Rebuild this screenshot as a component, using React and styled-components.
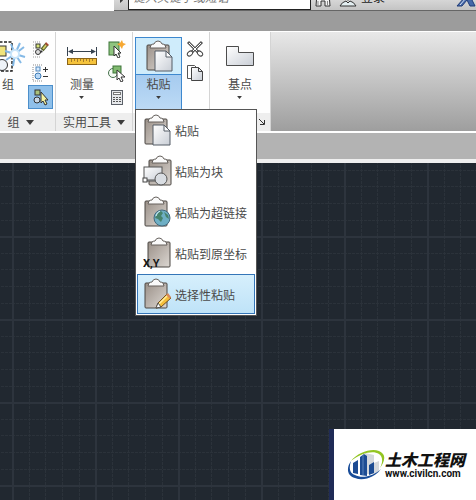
import React from 'react'
import styled, {createGlobalStyle, css} from 'styled-components'

const GlobalStyle = createGlobalStyle`
    * {
        box-sizing: border-box;
    }
    body {
        margin: 0;
        background: #212830;
        font-family: 'Noto Sans CJK SC', 'Liberation Sans', sans-serif;
        font-size: 12px;
        color: #4a4a4a;
    }
    button, input {
        font: inherit;
        color: inherit;
    }
    svg {
        display: block;
        flex: none;
    }
`

const Board = () => (
    <>
        <rect x="1" y="4" width="22" height="25" rx="1" fill="url(#board)" stroke="#4b4642" />
        <path d="M4 7L5 4Q6 3 8 3Q9 0 12 0Q15 0 16 3Q18 3 19 4L20 7Z" fill="#fafafa" stroke="#66615d" />
    </>
)

const Paste = () => (
    <svg width="28" height="32" viewBox="-1 -1 28 32">
        <Board />
        <path d="M9 10H20L26 16V30H9Z" fill="url(#paper)" stroke="#555c66" />
        <path d="M20 10V16H26Z" fill="#fff" stroke="#555c66" />
    </svg>
)

const PasteBlock = () => (
    <svg width="30" height="32" viewBox="-1 -1 30 32">
        <g transform="translate(5 0)"><Board /></g>
        <rect x="1" y="11" width="18" height="14" fill="url(#paper)" stroke="#555" />
        <circle cx="18" cy="23" r="6" fill="#d9dde2" stroke="#555" />
        <path d="M3 24H12" stroke="#555" />
        <rect x="0" y="22" width="4" height="4" fill="#fff" stroke="#444" />
    </svg>
)

const PasteLink = () => (
    <svg width="28" height="32" viewBox="-1 -1 28 32">
        <Board />
        <circle cx="18" cy="21" r="8" fill="#6eafc5" stroke="#42677c" />
        <path d="M13 17L17 14L19 16L17 19L19 21L17 25L14 22L11 21ZM20 15L24 18L25 22L22 20Z" fill="#47836c" />
        <path d="M12 19Q13 15 16 14" fill="none" stroke="#d8f2f4" />
    </svg>
)

const PasteXY = () => (
    <svg width="28" height="32" viewBox="-1 -1 28 32">
        <g transform="translate(3 0)"><Board /></g>
        <text x="-1" y="29" fontFamily="Roboto, sans-serif" fontSize="11" fontWeight="700" fill="#151515">X,Y</text>
    </svg>
)

const PasteSpecial = () => (
    <svg width="28" height="32" viewBox="-1 -1 28 32">
        <Board />
        <path d="M12 29L14 24L23 15L27 19L17 28Z" fill="#f6bf3a" stroke="#74501e" />
        <path d="M15 25L24 16" stroke="#fff0a0" strokeWidth="1.5" />
        <path d="M12 29L14 24L17 28Z" fill="#fff" stroke="#555" />
        <path d="M22 16L24 14L27 18L26 20Z" fill="#d78a5b" />
    </svg>
)

const Group = () => (
    <svg width="46" height="34" viewBox="2 0 46 34">
        <rect x="3" y="3" width="26" height="29" fill="none" stroke="#222" strokeWidth="1.5" strokeDasharray="3 1.500" />
        <rect x="6" y="7" width="17" height="10" fill="#efe37c" stroke="#333" />
        <circle cx="19" cy="26" r="5.500" fill="#eef3f8" stroke="#333" />
        <path d="M32 15L37 4M32 15L41 8M32 15L42 18M32 15L38 24M32 15L30 27M32 15L23 21M32 15L22 12M32 15L28 5" stroke="#84b9e6" strokeWidth="2" />
        <circle cx="32" cy="15" r="5" fill="#c9e5fa" />
        <circle cx="32" cy="15" r="3" fill="#fff" />
    </svg>
)

const EditGroup = () => (
    <svg width="18" height="18" viewBox="0 0 18 18">
        <path d="M1 2H9M1 5H2M1 8H2M1 11H2M1 14H2M1 17H9" stroke="#999" strokeDasharray="1 1" />
        <rect x="4" y="4" width="4" height="4" fill="#d8e57a" stroke="#333" />
        <circle cx="6" cy="12" r="2.500" fill="#ddd" stroke="#333" />
        <path d="M10 10L15 4" stroke="#566030" strokeWidth="4" />
        <path d="M11 9L15 4" stroke="#d2cd65" strokeWidth="2" />
        <path d="M8 13L9 10L11 12Z" fill="#333" />
        <path d="M14 2L17 5L15 6L13 4Z" fill="#a34932" />
    </svg>
)

const AddRemove = () => (
    <svg width="18" height="18" viewBox="0 0 18 18">
        <path d="M1 1H11M1 17H11" stroke="#888" strokeDasharray="1 1" />
        <path d="M1 3V16" stroke="#888" strokeDasharray="1 1" />
        <rect x="4" y="3" width="4" height="4" fill="#d7ebff" stroke="#5388bb" />
        <circle cx="6" cy="12" r="3" fill="#b9d9f7" stroke="#3b79b4" />
        <path d="M11 5.500H16M13.500 3V8M11 12.500H16" stroke="#333" />
    </svg>
)

const SelectGroup = () => (
    <svg width="18" height="18" viewBox="0 0 18 18">
        <rect x="3" y="2" width="5" height="5" fill="#a9c17b" stroke="#333" />
        <circle cx="5" cy="12" r="3" fill="#c8d8e7" stroke="#333" />
        <path d="M9 4V15L11 13L13 17L15 16L13 12H16Z" fill="#f4f3a1" stroke="#333" />
    </svg>
)

const Measure = () => (
    <svg width="30" height="18" viewBox="0 0 30 18">
        <path d="M.5 0V9M29.500 0V9M2 4.500H28" stroke="#36424f" />
        <path d="M1 4.500L6 2V7ZM29 4.500L24 2V7Z" fill="#36424f" />
        <rect x=".5" y="11.500" width="29" height="6" fill="#f5c33c" stroke="#8c6417" />
        <path d="M4.500 12V15M7.500 12V14M10.500 12V15M13.500 12V14M16.500 12V15M19.500 12V14M22.500 12V15M25.500 12V14" stroke="#a57c2b" />
    </svg>
)

const QuickSelect = () => (
    <svg width="18" height="18" viewBox="0 0 18 18">
        <rect x="1" y="2" width="10" height="13" fill="#8fc47f" stroke="#3c7538" />
        <path d="M14 0L15 3L18 4L15 6L14 9L12 6L9 4L12 3Z" fill="#f7a832" />
        <path d="M6 6V16L8 14L10 18L12 17L10 13H13Z" fill="#fff" stroke="#333" />
    </svg>
)

const SelectAll = () => (
    <svg width="18" height="18" viewBox="0 0 18 18">
        <circle cx="5" cy="9" r="4.500" fill="#f4fbf4" stroke="#456f4a" />
        <rect x="5" y="2" width="8" height="7" fill="#80b96f" stroke="#3c7538" />
        <path d="M9 6V16L11 14L13 18L15 17L13 13H17Z" fill="#fff" stroke="#333" />
    </svg>
)

const Calculator = () => (
    <svg width="18" height="18" viewBox="0 0 18 18">
        <rect x="3.500" y="2.500" width="11" height="14" fill="#e6e8eb" stroke="#5b6068" />
        <rect x="5.500" y="4.500" width="7" height="2" fill="#fff" stroke="#777" />
        <path d="M5 9.500H13M5 11.500H13M5 13.500H13" stroke="#555" strokeDasharray="2 1" />
    </svg>
)

const Cut = () => (
    <svg width="18" height="18" viewBox="0 0 18 18">
        <path d="M2 2L13 13M16 2L5 13" fill="none" stroke="#555" strokeWidth="3" />
        <path d="M3 3L13 13M15 3L5 13" stroke="#fff" />
        <ellipse cx="4" cy="13.500" rx="3" ry="2" transform="rotate(-40 4 13.500)" fill="#fff" stroke="#444" />
        <ellipse cx="14" cy="13.500" rx="3" ry="2" transform="rotate(40 14 13.500)" fill="#fff" stroke="#444" />
    </svg>
)

const Copy = () => (
    <svg width="18" height="18" viewBox="0 0 18 18">
        <path d="M1.500 1.500H8.500L11.500 4.500V14.500H1.500Z" fill="#fff" stroke="#555" />
        <path d="M5.500 3.500H12.500L16.500 7.500V16.500H5.500Z" fill="url(#paper)" stroke="#444" />
        <path d="M12.500 3.500V7.500H16.500" fill="none" stroke="#444" />
    </svg>
)

const BasePoint = () => (
    <svg width="28" height="20" viewBox="0 0 28 20">
        <path d="M.5 .5H12.500V6.500H27.500V19.500H.5Z" fill="url(#paper)" stroke="#4c4c4c" />
    </svg>
)

const Binoculars = () => (
    <svg width="16" height="17" viewBox="0 0 16 17">
        <path d="M2 3H6V9H10V3H14L15 16H10V11H6V16H1Z" fill="#f4f4f4" stroke="#333" />
        <path d="M3 11V15M12.500 11V15" stroke="#888" />
    </svg>
)

const User = () => (
    <svg width="18" height="17" viewBox="0 0 18 17">
        <circle cx="9" cy="6" r="4" fill="#fff" stroke="#333" />
        <path d="M1 16Q3 12 7 11L9 13L11 11Q15 12 17 16Z" fill="#e4eff2" stroke="#333" />
    </svg>
)

const Exchange = () => (
    <svg width="20" height="17" viewBox="0 0 20 17">
        <path d="M1 16L9 7L6 2H11L13 5L17 1H21L15 8L19 16H14L11 10L6 16Z" fill="#4668a8" stroke="#203d78" />
        <path d="M4 15L10 8" stroke="#d2e0f5" />
    </svg>
)

const Caret = ({big}) => (
    <svg width={big ? 8 : 5} height={big ? 5 : 3} viewBox="0 0 8 5">
        <path d="M0 0H8L4 5Z" fill="#3c3c3c" />
    </svg>
)

const Launcher = () => (
    <svg width="6" height="6" viewBox="0 0 6 6">
        <path d="M0 0L5 5M1 5.500H5.500V1" fill="none" stroke="#333" />
    </svg>
)

const Defs = () => (
    <Gradients width="0" height="0" aria-hidden="true">
        <linearGradient id="board" x2="1" y2="1">
            <stop stopColor="#9a9088" />
            <stop offset="1" stopColor="#dcd7d2" />
        </linearGradient>
        <linearGradient id="paper" x2="1" y2="1">
            <stop stopColor="#fff" />
            <stop offset="1" stopColor="#c9ced6" />
        </linearGradient>
    </Gradients>
)

const Grid = () => (
    <svg width="100%" height="100%" aria-hidden="true">
        <pattern id="grid" x="12" y="73" width="83" height="83" patternUnits="userSpaceOnUse">
            <path d="M17.500 0V83M33.500 0V83M50.500 0V83M67.500 0V83M0 17.500H83M0 33.500H83M0 50.500H83M0 67.500H83" stroke="#2b323a" strokeDasharray="3 1" />
            <path d="M1 0V83M0 1H83" stroke="#2d343d" strokeWidth="2" />
        </pattern>
        <rect width="100%" height="100%" fill="url(#grid)" />
    </svg>
)

const Logo = () => (
    <svg width="38" height="32" viewBox="0 0 38 32">
        <path d="M18 4L27 6V25H20Z" fill="#d4d8dc" />
        <path d="M27 14L32 12V23L27 25Z" fill="#d4d8dc" />
        <path d="M6 14L11 11V25L6 24ZM13 8L17 5L20 7V27L13 26ZM22 16L27 13V24L22 26Z" fill="#1d4c93" />
        <path d="M16 6V26" stroke="#5d83bb" />
        <path d="M4 12C12 2 30 -3 36 5C39 9 36 15 33 19C36 13 36 8 32 5C26 1 14 4 4 12Z" fill="#93c523" />
        <path d="M4 12C-1 19 0 27 8 29C17 33 29 27 34 20C27 27 15 30 8 26C2 24 2 18 4 12Z" fill="#194d99" />
    </svg>
)

const pasteOptions = [
    {label: '粘贴', icon: <Paste />},
    {label: '粘贴为块', icon: <PasteBlock />},
    {label: '粘贴为超链接', icon: <PasteLink />},
    {label: '粘贴到原坐标', icon: <PasteXY />},
    {label: '选择性粘贴', icon: <PasteSpecial />, active: true},
]

function Tool({label, icon, caret = true, width}) {
    return (
        <ToolButton $width={width}>
            <ToolIcon>{icon}</ToolIcon>
            <ToolText>{label}{caret && <Caret />}</ToolText>
        </ToolButton>
    )
}

export default function App() {
    return (
        <Window>
            <GlobalStyle />
            <Defs />
            <TitleBar>
                <TitleTools>
                    <SearchArrow aria-label="展开"><Caret /></SearchArrow>
                    <Search aria-label="搜索" placeholder="键入关键字或短语" />
                    <TitleButton aria-label="查找"><Binoculars /></TitleButton>
                    <TitleButton><User />登录</TitleButton>
                    <Spacer />
                    <TitleButton aria-label="Exchange"><Exchange /></TitleButton>
                </TitleTools>
            </TitleBar>
            <TabStrip />
            <Ribbon>
                <Panel $width={70} $clipped>
                    <PanelBody $left={2}>
                        <Tool label="组" icon={<Group />} caret={false} width={40} />
                        <SmallTools>
                            <SmallButton aria-label="编辑组"><EditGroup /></SmallButton>
                            <SmallButton aria-label="添加删除"><AddRemove /></SmallButton>
                            <SmallButton aria-label="组选择" $active><SelectGroup /></SmallButton>
                        </SmallTools>
                    </PanelBody>
                    <PanelTitle>组 <Caret big /></PanelTitle>
                </Panel>
                <Panel $width={77}>
                    <PanelBody $left={4}>
                        <Tool label="测量" icon={<Measure />} width={44} />
                        <SmallTools>
                            <SmallButton aria-label="快速选择"><QuickSelect /></SmallButton>
                            <SmallButton aria-label="全部选择"><SelectAll /></SmallButton>
                            <SmallButton aria-label="计算器"><Calculator /></SmallButton>
                        </SmallTools>
                    </PanelBody>
                    <PanelTitle>实用工具 <Caret big /></PanelTitle>
                </Panel>
                <Panel $width={77}>
                    <PanelBody $left={2}>
                        <PasteTool>
                            <PasteTop aria-label="粘贴"><Paste /></PasteTop>
                            <PasteBottom>粘贴<Caret /></PasteBottom>
                            <Menu>
                                {pasteOptions.map(option => (
                                    <MenuItem key={option.label} $active={option.active}>
                                        <MenuIcon>{option.icon}</MenuIcon>
                                        {option.label}
                                    </MenuItem>
                                ))}
                            </Menu>
                        </PasteTool>
                        <SmallTools>
                            <SmallButton aria-label="剪切"><Cut /></SmallButton>
                            <SmallButton aria-label="复制"><Copy /></SmallButton>
                        </SmallTools>
                    </PanelBody>
                    <PanelTitle />
                </Panel>
                <Panel $width={61}>
                    <PanelBody $left={8}>
                        <Tool label="基点" icon={<BasePoint />} width={44} />
                    </PanelBody>
                    <PanelTitle $end><Launcher /></PanelTitle>
                </Panel>
            </Ribbon>
            <FileTabs />
            <Canvas>
                <Grid />
                <Watermark>
                    <Logo />
                    <Site>
                        <SiteName>土木工程网</SiteName>
                        <SiteUrl>www.civilcn.com</SiteUrl>
                    </Site>
                </Watermark>
            </Canvas>
        </Window>
    )
}

const Window = styled.div`
    display: flex;
    flex-direction: column;
    min-height: 100vh;
    overflow: hidden;
`
const Gradients = styled.svg`
    position: absolute;
`
const TitleBar = styled.header`
    display: flex;
    align-items: flex-end;
    height: 11px;
    padding-left: 114px;
    overflow: hidden;
    background: #fff;
`
const TitleTools = styled.div`
    flex: 1;
    display: flex;
    align-items: flex-end;
    height: 24px;
    background: linear-gradient(#eee, #c4c4c4);
    border-bottom: 1px solid #666;
`
const SearchArrow = styled.button`
    display: flex;
    align-items: center;
    justify-content: center;
    width: 14px;
    height: 20px;
    padding: 0;
    border: none;
    background: none;
    svg{
        transform: rotate(-90deg);
    }
`
const Search = styled.input`
    width: 183px;
    height: 23px;
    padding: 0 4px 4px;
    border: 1px solid #222;
    background: #fff;
    line-height: 16px;
    &::placeholder{
        color: #777;
        font-style: italic;
        opacity: 1;
    }
`
const TitleButton = styled.button`
    display: flex;
    align-items: flex-end;
    gap: 4px;
    height: 23px;
    margin-left: 4px;
    padding: 0 0 3px;
    border: none;
    background: none;
    color: #222;
    line-height: 20px;
    & + &{
        margin-left: 8px;
    }
`
const Spacer = styled.div`
    flex: 1;
`
const TabStrip = styled.div`
    height: 21px;
    background: #9c9c9c;
    border-bottom: 1px solid #fff;
`
const Ribbon = styled.div`
    display: flex;
    height: 101px;
    background: linear-gradient(#e8e8e8, #9e9e9e);
    border-bottom: 2px solid #fff;
`
const Panel = styled.section`
    display: flex;
    flex-direction: column;
    width: ${p => p.$width}px;
    margin-left: ${p => p.$clipped ? -14 : 0}px;
    background: #fefefe;
    border-right: 1px solid #d4d4d4;
`
const PanelBody = styled.div`
    flex: 1;
    display: flex;
    align-items: flex-start;
    padding-top: 5px;
    padding-left: ${p => p.$left}px;
`
const PanelTitle = styled.div`
    display: flex;
    align-items: center;
    justify-content: ${p => p.$end ? 'flex-end' : 'center'};
    gap: 6px;
    height: 18px;
    padding: 0 5px;
    background: #eee;
    line-height: 18px;
`
const ToolButton = styled.button`
    display: flex;
    flex-direction: column;
    align-items: center;
    width: ${p => p.$width}px;
    height: 72px;
    padding: 0;
    border: none;
    background: none;
`
const ToolIcon = styled.span`
    display: flex;
    align-items: center;
    justify-content: center;
    height: 38px;
`
const ToolText = styled.span`
    display: flex;
    flex-direction: column;
    align-items: center;
    gap: 3px;
    line-height: 18px;
`
const SmallTools = styled.div`
    display: flex;
    flex-direction: column;
`
const SmallButton = styled.button`
    display: flex;
    align-items: center;
    justify-content: center;
    width: 25px;
    height: 24px;
    padding: 0;
    border: 1px solid transparent;
    background: none;
    ${p => p.$active && css`
        border-color: #4c8fcb;
        background: #8fc0ea;
    `}
`
const PasteTool = styled.div`
    position: relative;
    width: 47px;
`
const PasteTop = styled.button`
    display: flex;
    align-items: center;
    justify-content: center;
    width: 100%;
    height: 38px;
    padding: 0;
    border: 1px solid #3d88cf;
    background: #cfecfb;
`
const PasteBottom = styled.button`
    display: flex;
    flex-direction: column;
    align-items: center;
    gap: 3px;
    width: 100%;
    height: 34px;
    padding: 0;
    border: 1px solid #3d88cf;
    border-top: none;
    border-bottom: none;
    background: linear-gradient(#a6cbef, #bcdaf5);
    line-height: 18px;
`
const Menu = styled.div`
    position: absolute;
    top: 100%;
    left: 0;
    z-index: 10;
    display: flex;
    flex-direction: column;
    gap: 1px;
    padding: 0 1px 1px;
    border: 1px solid #555;
    background: #fff;
`
const MenuItem = styled.button`
    display: flex;
    align-items: center;
    gap: 3px;
    width: 118px;
    height: 40px;
    padding: 0 0 0 4px;
    border: 1px solid ${p => p.$active ? '#3475b8' : 'transparent'};
    background: ${p => p.$active ? 'linear-gradient(#d6effc, #bfe3f8)' : 'none'};
    white-space: nowrap;
`
const MenuIcon = styled.span`
    display: flex;
    justify-content: center;
    width: 30px;
`
const FileTabs = styled.div`
    height: 30px;
    background: #b3b3b3;
    border-bottom: 4px solid #efefef;
`
const Canvas = styled.main`
    position: relative;
    flex: 1;
    background: #212830;
    & > svg{
        position: absolute;
        inset: 0;
    }
`
const Watermark = styled.a.attrs({href: '#'})`
    position: absolute;
    right: 0;
    bottom: 0;
    display: flex;
    align-items: center;
    width: 142px;
    height: 71px;
    padding-left: 13px;
    background: #fff;
    box-shadow: -5px 0 0 #1f2b57;
    color: #111;
    text-decoration: none;
`
const Site = styled.div`
    display: flex;
    flex-direction: column;
    white-space: nowrap;
`
const SiteName = styled.div`
    font-size: 16px;
    font-weight: 900;
    font-style: italic;
    line-height: 18px;
`
const SiteUrl = styled.div`
    font-family: Roboto, sans-serif;
    font-size: 10px;
    font-weight: 700;
    line-height: 12px;
`
